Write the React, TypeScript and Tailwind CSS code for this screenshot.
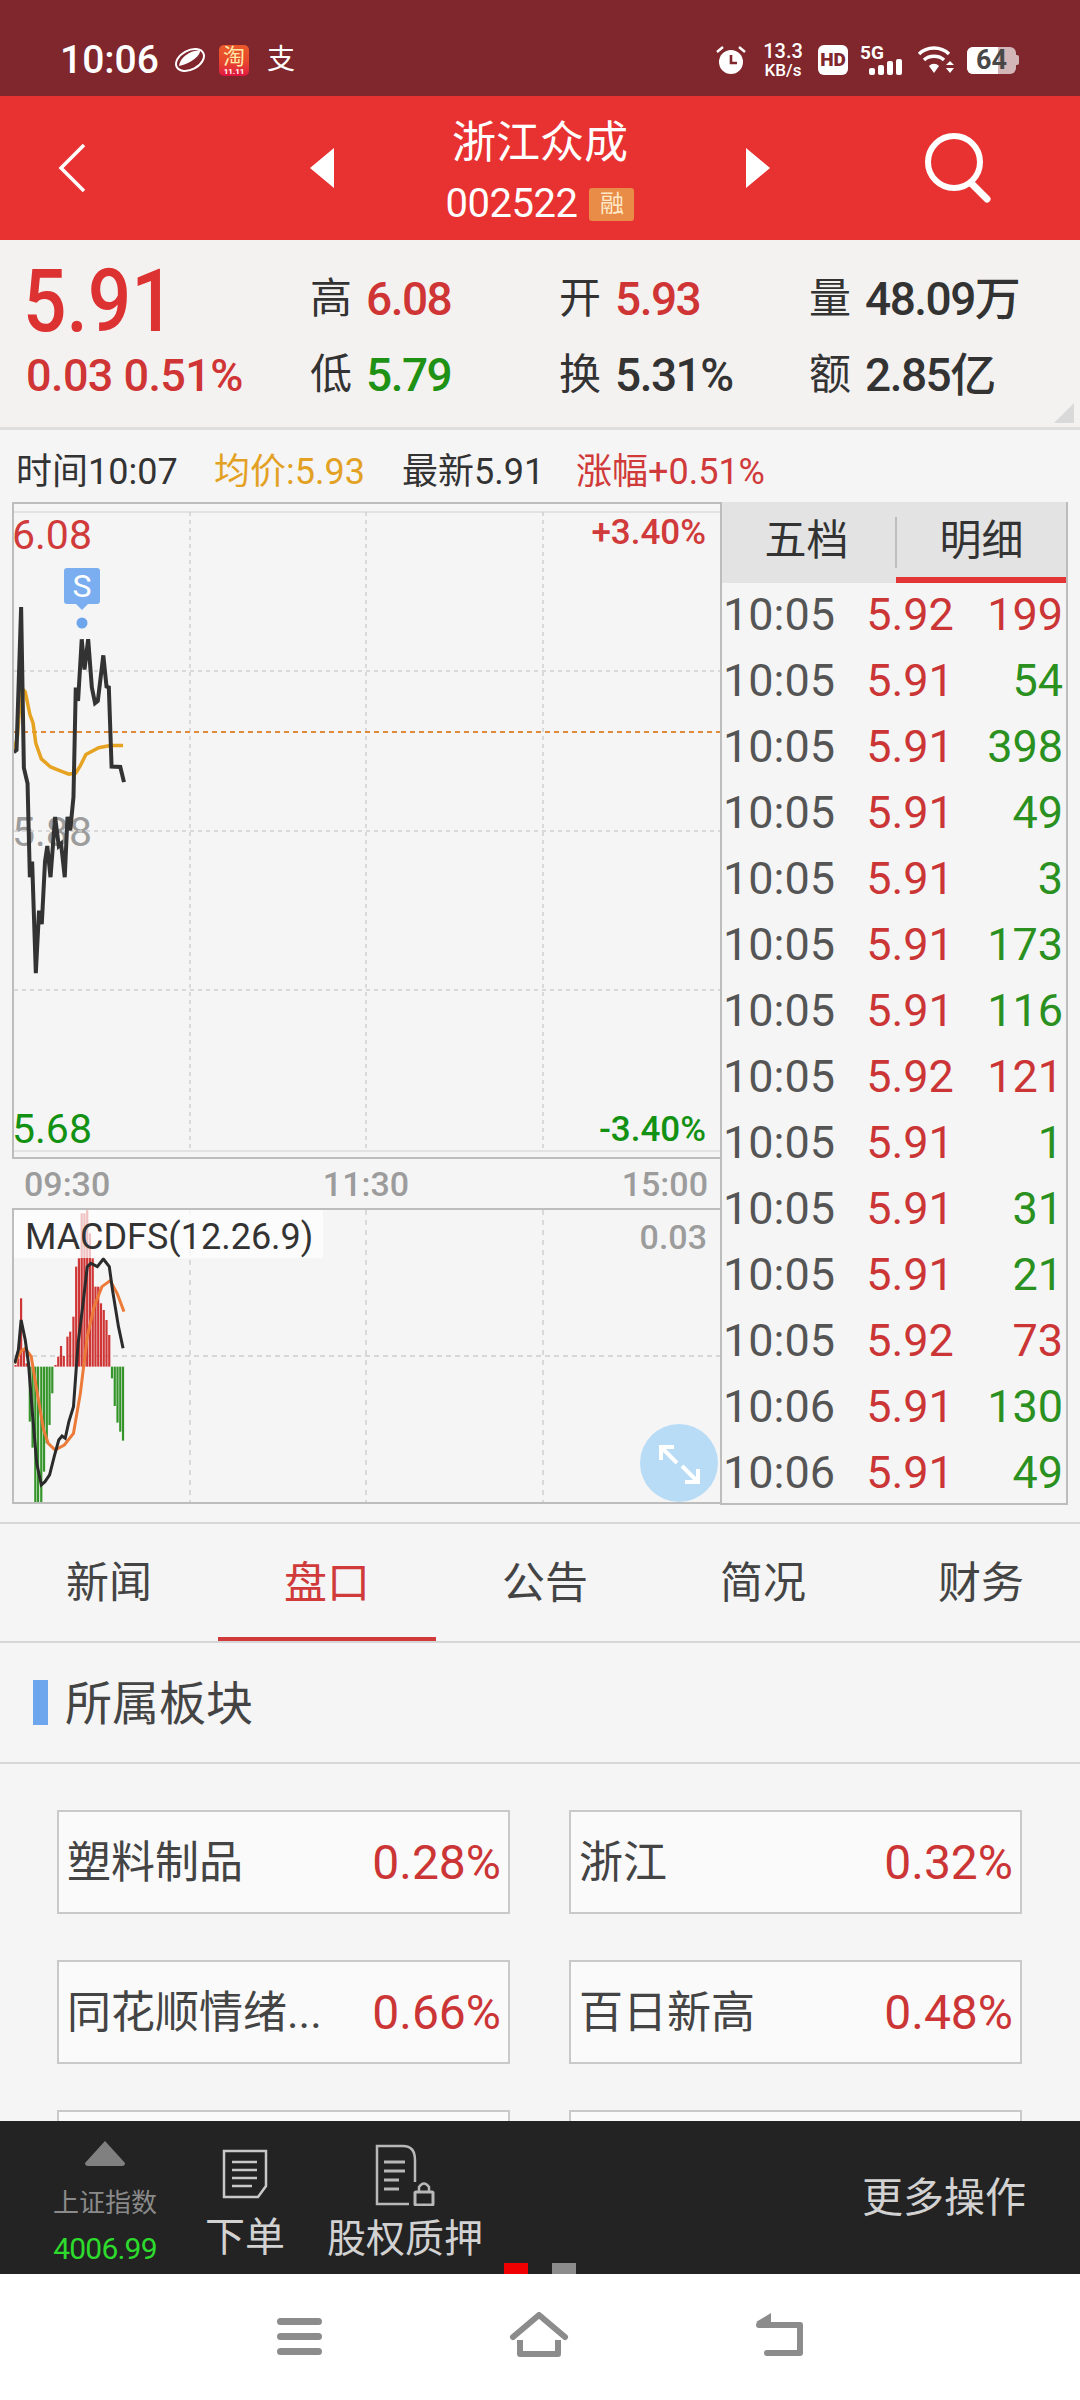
import React from "react";

const RED = "text-[#d03535]";
const rows: [string, string, string, boolean][] = [
  ["10:05", "5.92", "199", true],
  ["10:05", "5.91", "54", false],
  ["10:05", "5.91", "398", false],
  ["10:05", "5.91", "49", false],
  ["10:05", "5.91", "3", false],
  ["10:05", "5.91", "173", false],
  ["10:05", "5.91", "116", false],
  ["10:05", "5.92", "121", true],
  ["10:05", "5.91", "1", false],
  ["10:05", "5.91", "31", false],
  ["10:05", "5.91", "21", false],
  ["10:05", "5.92", "73", true],
  ["10:06", "5.91", "130", false],
  ["10:06", "5.91", "49", false],
];

const priceLine =
  "30,565 36,560 46,240 52,600 60,635 65,845 70,810 78,1060 85,920 91,950 98,810 103,775 110,845 120,710 128,775 133,770 141,845 147,710 153,740 160,665 165,420 170,450 178,312 184,380 192,312 200,420 207,455 213,450 225,348 232,418 237,420 243,597 262,598 270,632";
const avgLine =
  "30,565 38,530 46,420 55,430 65,480 72,500 78,545 90,580 110,598 130,606 150,614 165,612 175,595 187,570 215,555 240,550 268,550";
const macdBlack =
  "32,640 40,600 46,510 55,570 62,640 70,780 80,940 90,1005 98,995 108,975 118,920 128,870 135,858 142,865 150,815 160,770 170,580 180,470 190,350 198,340 212,350 225,327 238,350 245,420 258,530 268,595";
const macdOrange =
  "32,640 45,605 55,595 68,620 80,720 95,840 105,880 120,900 140,885 160,850 175,730 190,560 205,470 222,410 240,392 255,430 270,485";
const macdBars: [number, number][] = [
  [34, 645], [40, 625], [46, 445], [52, 600], [58, 640],
  [65, 815], [71, 893], [77, 1058], [83, 1058], [90, 1058], [96, 965], [102, 880], [108, 825], [114, 730],
  [121, 645], [127, 620], [133, 588], [139, 618], [147, 560], [153, 545], [160, 500], [166, 350], [172, 325],
  [178, 190], [184, 190], [190, 175], [196, 250], [202, 325], [208, 410], [214, 410], [220, 460], [226, 480], [232, 510], [238, 555],
  [244, 685], [250, 768], [256, 818], [262, 845], [268, 872],
];

function StatusBar() {
  return (
    <div className="h-[96px] shrink-0 bg-[#7f272c] flex items-center text-white pt-[24px] pl-[60px]">
      <span className="text-[39px] font-medium leading-none w-[114px]">10:06</span>
      <svg width="32" height="26" viewBox="0 0 32 26" className="mr-[13px]">
        <ellipse cx="16" cy="13" rx="15" ry="9.5" transform="rotate(-28 16 13)" fill="none" stroke="white" strokeWidth="2" />
        <path d="M5 19 C6 11 14 4 26 3 C27 8 18 16 5 19 Z" fill="white" />
      </svg>
      <div className="w-[30px] h-[31px] rounded-[5px] bg-gradient-to-b from-[#ea5a2c] via-[#e8482c] to-[#e01040] text-[#ffe9a8] overflow-hidden flex flex-col items-center">
        <span className="text-[22px] leading-[23px]">淘</span>
        <span className="text-[8px] leading-[8px] text-white font-bold">11.11</span>
      </div>
      <span className="ml-[18px] text-[28px] leading-none">支</span>
      <svg width="32" height="32" viewBox="0 0 32 32" className="ml-[420px]">
        <circle cx="16" cy="18" r="12" fill="white" />
        <path d="M16 11 V19 H22" stroke="#7f272c" strokeWidth="2.6" fill="none" />
        <path d="M2 8 L8 3 M30 8 L24 3" stroke="white" strokeWidth="2.4" />
      </svg>
      <div className="ml-[13px] w-[46px] flex flex-col items-center font-medium gap-[1px]">
        <span className="text-[20px] leading-[19px]">13.3</span>
        <span className="text-[17px] leading-[16px]">KB/s</span>
      </div>
      <div className="ml-[12px] w-[30px] h-[30px] rounded-[6px] bg-white text-[#7f272c] text-[19px] font-black leading-[30px] text-center">HD</div>
      <div className="ml-[12px] w-[46px] h-[30px] relative">
        <span className="absolute left-0 -top-[2px] text-[19px] leading-[19px] font-bold">5G</span>
        <div className="absolute left-[9px] bottom-0 flex items-end gap-[3px]">
          <div className="w-[6px] h-[7px] rounded-[2px] bg-white" />
          <div className="w-[6px] h-[10px] rounded-[2px] bg-white" />
          <div className="w-[6px] h-[14px] rounded-[2px] bg-white" />
          <div className="w-[6px] h-[16px] rounded-[2px] bg-white" />
        </div>
      </div>
      <svg width="38" height="28" viewBox="0 0 38 28" className="ml-[11px]">
        <path d="M2 8 C10 0 24 0 32 8" fill="none" stroke="white" strokeWidth="3.4" />
        <path d="M7 14 C12 9 22 9 27 14" fill="none" stroke="white" strokeWidth="3.4" />
        <path d="M12 20 C15 17 19 17 22 20 L17 27 Z" fill="white" />
        <path d="M29 19 L33 15 L37 19 Z M29 22 L37 22 L33 27 Z" fill="white" />
      </svg>
      <div className="ml-[12px] w-[49px] h-[27px] rounded-[6px] bg-[#d3b6b8] relative">
        <div className="w-[31px] h-full bg-white rounded-l-[6px]" />
        <span className="absolute inset-0 text-center text-[#484848] text-[27px] leading-[27px] font-bold">64</span>
      </div>
      <div className="w-[3px] h-[10px] rounded-r-[2px] bg-[#d3b6b8]" />
    </div>
  );
}

function Header() {
  return (
    <div className="h-[144px] shrink-0 bg-[#e83232] flex items-center text-white pl-[58px]">
      <svg width="28" height="50" viewBox="0 0 28 50">
        <path d="M26 2 L3 25 L26 48" fill="none" stroke="white" strokeWidth="3.5" />
      </svg>
      <svg width="24" height="40" viewBox="0 0 24 40" className="ml-[224px]">
        <path d="M24 0 V40 L0 20 Z" fill="white" />
      </svg>
      <div className="w-[412px] h-[144px] flex flex-col items-center pt-[23px]">
        <div className="text-[44px] leading-[48px]">浙江众成</div>
        <div className="mt-[19px] h-[36px] flex items-center gap-[12px]">
          <span className="text-[40px] leading-[36px] tracking-[-0.5px]">002522</span>
          <span className="w-[45px] h-[33px] rounded-[3px] bg-[#e88c48] text-[#ffe9c8] text-[24px] leading-[33px] text-center">融</span>
        </div>
      </div>
      <svg width="24" height="40" viewBox="0 0 24 40">
        <path d="M0 0 V40 L24 20 Z" fill="white" />
      </svg>
      <svg width="70" height="72" viewBox="0 0 70 72" className="ml-[154px]">
        <circle cx="30" cy="30" r="26" fill="none" stroke="white" strokeWidth="6" />
        <path d="M47 51 L63 67" stroke="white" strokeWidth="7" strokeLinecap="round" />
      </svg>
    </div>
  );
}

function Stat({ label, value, color }: { label: string; value: string; color: string }) {
  return (
    <div className="flex items-center gap-[14px] h-[76px]">
      <span className="text-[42px] text-[#333] leading-none">{label}</span>
      <span className={`text-[46px] font-medium leading-none tracking-[-1.5px] ${color}`}>{value}</span>
    </div>
  );
}

function Quote() {
  return (
    <div className="h-[190px] shrink-0 bg-[#f4f2f1] border-b-[3px] border-[#dedede] relative pt-[21px] pl-[26px] grid grid-cols-[284px_249px_250px_1fr] grid-rows-[76px_76px]">
      <div className="h-[76px] flex items-center -ml-[3px]">
        <span className="text-[88px] font-medium leading-none text-[#dc3232] mt-[4px] origin-left scale-x-[0.87]">5.91</span>
      </div>
      <Stat label="高" value="6.08" color={RED} />
      <Stat label="开" value="5.93" color={RED} />
      <Stat label="量" value="48.09万" color="text-[#333]" />
      <div className="h-[76px] flex items-center">
        <span className={`text-[45px] font-medium leading-none tracking-[-0.6px] ${RED}`}>0.03 0.51%</span>
      </div>
      <Stat label="低" value="5.79" color="text-[#1f9114]" />
      <Stat label="换" value="5.31%" color="text-[#333]" />
      <Stat label="额" value="2.85亿" color="text-[#333]" />
      <svg width="20" height="20" viewBox="0 0 20 20" className="absolute right-[6px] bottom-[4px]">
        <path d="M20 0 V20 H0 Z" fill="#d9d9d9" />
      </svg>
    </div>
  );
}

function InfoRow() {
  return (
    <div className="h-[72px] shrink-0 pt-[12px] flex items-center text-[36px] leading-none pl-[16px] whitespace-nowrap">
      <span className="w-[198px] text-[#333]">时间10:07</span>
      <span className="w-[188px] text-[#e3a124]">均价:5.93</span>
      <span className="w-[174px] text-[#333]">最新5.91</span>
      <span className="text-[#d03a3a]">涨幅+0.51%</span>
    </div>
  );
}

function PriceChart() {
  return (
    <div className="relative h-[657px] border-2 border-r-0 border-[#bdbdbd]">
      <span className="absolute -left-[2px] top-[8px] text-[41px] leading-[46px] text-[#d03a3a]">6.08</span>
      <span className="absolute right-[14px] top-[9px] text-[35px] leading-[40px] font-medium text-[#d03a3a]">+3.40%</span>
      <span className="absolute -left-[2px] top-[305px] text-[41px] leading-[46px] text-[#9c9c9c]">5.88</span>
      <span className="absolute -left-[2px] top-[602px] text-[41px] leading-[46px] text-[#129112]">5.68</span>
      <span className="absolute right-[14px] top-[606px] text-[35px] leading-[40px] font-medium text-[#129112]">-3.40%</span>
      <svg className="absolute inset-0 w-full h-full" viewBox="14 504 706 653" preserveAspectRatio="none">
        <path d="M14 512 H720 M14 1151 H720" stroke="#dcdcdc" strokeWidth="1.5" fill="none" />
        <path d="M190 512 V1151 M366 512 V1151 M543 512 V1151 M14 671 H720 M14 831 H720 M14 990 H720" stroke="#d0d0d0" strokeWidth="1.5" strokeDasharray="4 4" fill="none" />
        <path d="M14 732 H720" stroke="#e08a3c" strokeWidth="2" strokeDasharray="5 4" fill="none" />
        <g transform="translate(0,500) scale(0.4592,0.4464)">
          <polyline points={avgLine} fill="none" stroke="#e6a322" strokeWidth="3.5" vectorEffect="non-scaling-stroke" />
          <polyline points={priceLine} fill="none" stroke="#333" strokeWidth="4" vectorEffect="non-scaling-stroke" />
        </g>
        <rect x="64" y="568" width="36" height="36" rx="3" fill="#7aaef0" />
        <path d="M76 604 L88 604 L82 610 Z" fill="#7aaef0" />
        <circle cx="82" cy="623" r="5.5" fill="#6ea6ee" />
      </svg>
      <span className="absolute left-[50px] top-[64px] w-[36px] h-[36px] text-center text-white text-[32px] leading-[36px]">S</span>
    </div>
  );
}

function MacdChart() {
  return (
    <div className="relative h-[296px] border-2 border-r-0 border-[#bdbdbd]">
      <svg className="absolute inset-0 w-full h-full" viewBox="14 1210 706 292" preserveAspectRatio="none">
        <path d="M190 1210 V1502 M366 1210 V1502 M543 1210 V1502" stroke="#cfcfcf" strokeWidth="1.5" strokeDasharray="5 5" fill="none" />
        <path d="M14 1356 H720" stroke="#d6d6d6" strokeWidth="2" strokeDasharray="5 4" fill="none" />
        <g transform="translate(0,1150) scale(0.4592,0.3333)">
          {macdBars.map(([x, y]) =>
            y < 650 ? (
              <rect key={x} x={x - 2.5} y={y} width="4.8" height={650 - y} fill="#cf3534" />
            ) : (
              <rect key={x} x={x - 2.5} y="650" width="4.8" height={y - 650} fill="#35952a" />
            )
          )}
          <polyline points={macdOrange} fill="none" stroke="#ec7a38" strokeWidth="3" vectorEffect="non-scaling-stroke" />
          <polyline points={macdBlack} fill="none" stroke="#2b2b2b" strokeWidth="3" vectorEffect="non-scaling-stroke" />
        </g>
      </svg>
      <div className="absolute left-0 top-0 w-[309px] h-[48px] bg-white/70 pl-[11px] text-[36px] leading-[54px] text-[#333] whitespace-nowrap">MACDFS(12.26.9)</div>
      <span className="absolute right-[13px] top-[7px] text-[34px] leading-[40px] font-medium text-[#9c9c9c]">0.03</span>
      <div className="absolute left-[626px] top-[214px] w-[78px] h-[78px] rounded-full bg-[#b9dcf6]">
        <svg width="78" height="78" viewBox="0 0 78 78">
          <path d="M21 36 V23 H34 M21 23 L37 39 M58 45 V58 H45 M58 58 L42 42" fill="none" stroke="white" strokeWidth="4" />
        </svg>
      </div>
    </div>
  );
}

function Ticks() {
  return (
    <div className="w-[348px] h-[1003px] shrink-0 border-l-2 border-r-2 border-b-2 border-[#bdbdbd]">
      <div className="h-[81px] bg-[#e3e3e3] relative flex text-[42px] text-[#333] leading-none">
        <div className="w-[173px] h-[75px] flex items-center justify-center pt-[3px] -ml-[2px]">五档</div>
        <div className="w-[2px] h-[51px] mt-[15px] ml-[2px] bg-[#bdbdbd]" />
        <div className="flex-1 h-[75px] flex items-center justify-center pt-[3px]">明细</div>
        <div className="absolute left-[174px] right-0 bottom-0 h-[6px] bg-[#e33535]" />
      </div>
      <div className="flex flex-col">
        {rows.map(([t, p, v, up], i) => (
          <div key={i} className="h-[66px] flex items-center text-[45px] leading-none pb-[3px]">
            <span className="pl-[1px] w-[139px] text-[#555]">{t}</span>
            <span className="w-[98px] text-center text-[#cb3535]">{p}</span>
            <span className={`flex-1 text-right pr-[3px] ${up ? "text-[#cb3535]" : "text-[#2a9020]"}`}>{v}</span>
          </div>
        ))}
      </div>
    </div>
  );
}

const tabs = ["新闻", "盘口", "公告", "简况", "财务"];
const boxes: [string, string][] = [
  ["塑料制品", "0.28%"],
  ["浙江", "0.32%"],
  ["同花顺情绪...", "0.66%"],
  ["百日新高", "0.48%"],
];

function Main() {
  return (
    <div className="flex-1 min-h-0 overflow-hidden flex flex-col">
      <div className="shrink-0 flex pl-[12px]">
        <div className="w-[708px] shrink-0">
          <PriceChart />
          <div className="h-[49px] flex items-center justify-between px-[12px] text-[34px] leading-none font-medium text-[#9c9c9c]">
            <span>09:30</span>
            <span>11:30</span>
            <span>15:00</span>
          </div>
          <MacdChart />
        </div>
        <Ticks />
      </div>
      <div className="h-[17px] shrink-0" />
      <div className="h-[121px] shrink-0 border-t-2 border-b-2 border-[#d6d6d6] flex overflow-hidden">
        {tabs.map((t, i) => (
          <div key={t} className="relative w-[218px] shrink-0 flex items-center justify-center pt-[2px] text-[43px] leading-none">
            <span className={i === 1 ? "text-[#d03a3a]" : "text-[#444]"}>{t}</span>
            {i === 1 && <div className="absolute left-0 right-0 bottom-0 h-[4px] bg-[#d03a3a]" />}
          </div>
        ))}
      </div>
      <div className="h-[121px] shrink-0 border-b-2 border-[#d6d6d6] flex items-center pl-[33px]">
        <div className="w-[15px] h-[45px] bg-[#6ea6ee]" />
        <span className="ml-[17px] mt-[2px] text-[47px] leading-none text-[#444]">所属板块</span>
      </div>
      <div className="pt-[46px] px-[57px] grid grid-cols-[453px_453px] gap-x-[59px] gap-y-[46px]">
        {boxes.map(([n, p]) => (
          <div key={n} className="h-[104px] border-2 border-[#c9c9c9] bg-[#fafafa] flex items-center justify-between pl-[8px] pr-[7px]">
            <span className="mt-[2px] text-[44px] leading-none text-[#444] whitespace-nowrap">{n}</span>
            <span className="mt-[2px] text-[48px] leading-none text-[#cb3535]">{p}</span>
          </div>
        ))}
        <div className="h-[104px] border-2 border-[#c9c9c9] bg-[#fafafa]" />
        <div className="h-[104px] border-2 border-[#c9c9c9] bg-[#fafafa]" />
      </div>
    </div>
  );
}

function ActionBar() {
  return (
    <div className="h-[153px] shrink-0 bg-[#232323] relative flex">
      <div className="w-[202px] pl-[8px] flex flex-col items-center">
        <svg width="40" height="25" viewBox="0 0 40 25" className="mt-[20px]">
          <path d="M20 0 L40 22 Q40 25 37 25 H3 Q0 25 0 22 Z" fill="#808080" />
        </svg>
        <span className="mt-[24px] text-[26px] leading-none text-[#8a8a8a]">上证指数</span>
        <span className="mt-[18px] text-[30px] leading-none text-[#2ddb2d] tracking-[-0.8px]">4006.99</span>
      </div>
      <div className="w-[86px] flex flex-col items-center">
        <svg width="46" height="50" viewBox="0 0 46 50" className="mt-[28px]">
          <path d="M2 2 H44 V37 L36 48 H2 Z" fill="none" stroke="#c8c8c8" strokeWidth="2.5" />
          <path d="M10 13 H35 M10 21 H35 M10 29 H35 M10 37 H30" stroke="#c8c8c8" strokeWidth="2.5" />
        </svg>
        <span className="mt-[19px] text-[40px] leading-none text-[#d2d2d2] whitespace-nowrap">下单</span>
      </div>
      <div className="w-[234px] flex flex-col items-center">
        <svg width="60" height="62" viewBox="0 0 60 62" className="mt-[23px]">
          <path d="M40 38 V16 Q40 2 28 2 H2 V60 H34" fill="none" stroke="#b8b8b8" strokeWidth="2.5" />
          <path d="M9 18 H30 M9 27 H30 M9 36 H24 M9 45 H24" stroke="#b8b8b8" strokeWidth="3" />
          <rect x="40" y="48" width="18" height="13" rx="1" fill="none" stroke="#b8b8b8" strokeWidth="3" />
          <path d="M44 48 V43 Q49 36 54 43 V48" fill="none" stroke="#b8b8b8" strokeWidth="2.5" />
        </svg>
        <span className="mt-[14px] text-[39px] leading-none text-[#d2d2d2] whitespace-nowrap">股权质押</span>
      </div>
      <span className="ml-auto mr-[54px] self-center mt-[2px] text-[41px] leading-none text-[#d2d2d2]">更多操作</span>
      <div className="absolute left-[504px] bottom-0 w-[24px] h-[11px] bg-[#f00000]" />
      <div className="absolute left-[552px] bottom-0 w-[24px] h-[11px] bg-[#8c8c8c]" />
    </div>
  );
}

function NavBar() {
  return (
    <div className="h-[126px] shrink-0 bg-white flex items-start pt-[38px] pl-[277px]">
      <svg width="45" height="37" viewBox="0 0 45 37" className="mt-[6px]">
        <path d="M3.5 3.5 H41.5 M3.5 18.5 H41.5 M3.5 33.5 H41.5" stroke="#8c8c8c" strokeWidth="7" strokeLinecap="round" />
      </svg>
      <svg width="60" height="45" viewBox="0 0 60 45" className="ml-[187px]">
        <path d="M4 25 L30 3 L56 25" fill="none" stroke="#8c8c8c" strokeWidth="6" strokeLinecap="round" strokeLinejoin="round" />
        <path d="M11 28 V42 H49 V28" fill="none" stroke="#8c8c8c" strokeWidth="6" strokeLinejoin="round" />
      </svg>
      <svg width="50" height="44" viewBox="0 0 50 44" className="ml-[186px] mt-[1px]">
        <path d="M4 12 H45 V40 H12" fill="none" stroke="#8c8c8c" strokeWidth="6" strokeLinecap="round" strokeLinejoin="round" />
        <path d="M16 0 L1 9 L16 15 Z" fill="#8c8c8c" />
      </svg>
    </div>
  );
}

export default function App() {
  return (
    <div className="w-[1080px] h-[2400px] overflow-hidden bg-[#f5f5f5] flex flex-col font-['Roboto','Noto_Sans_CJK_SC',sans-serif]">
      <StatusBar />
      <Header />
      <Quote />
      <InfoRow />
      <Main />
      <ActionBar />
      <NavBar />
    </div>
  );
}
